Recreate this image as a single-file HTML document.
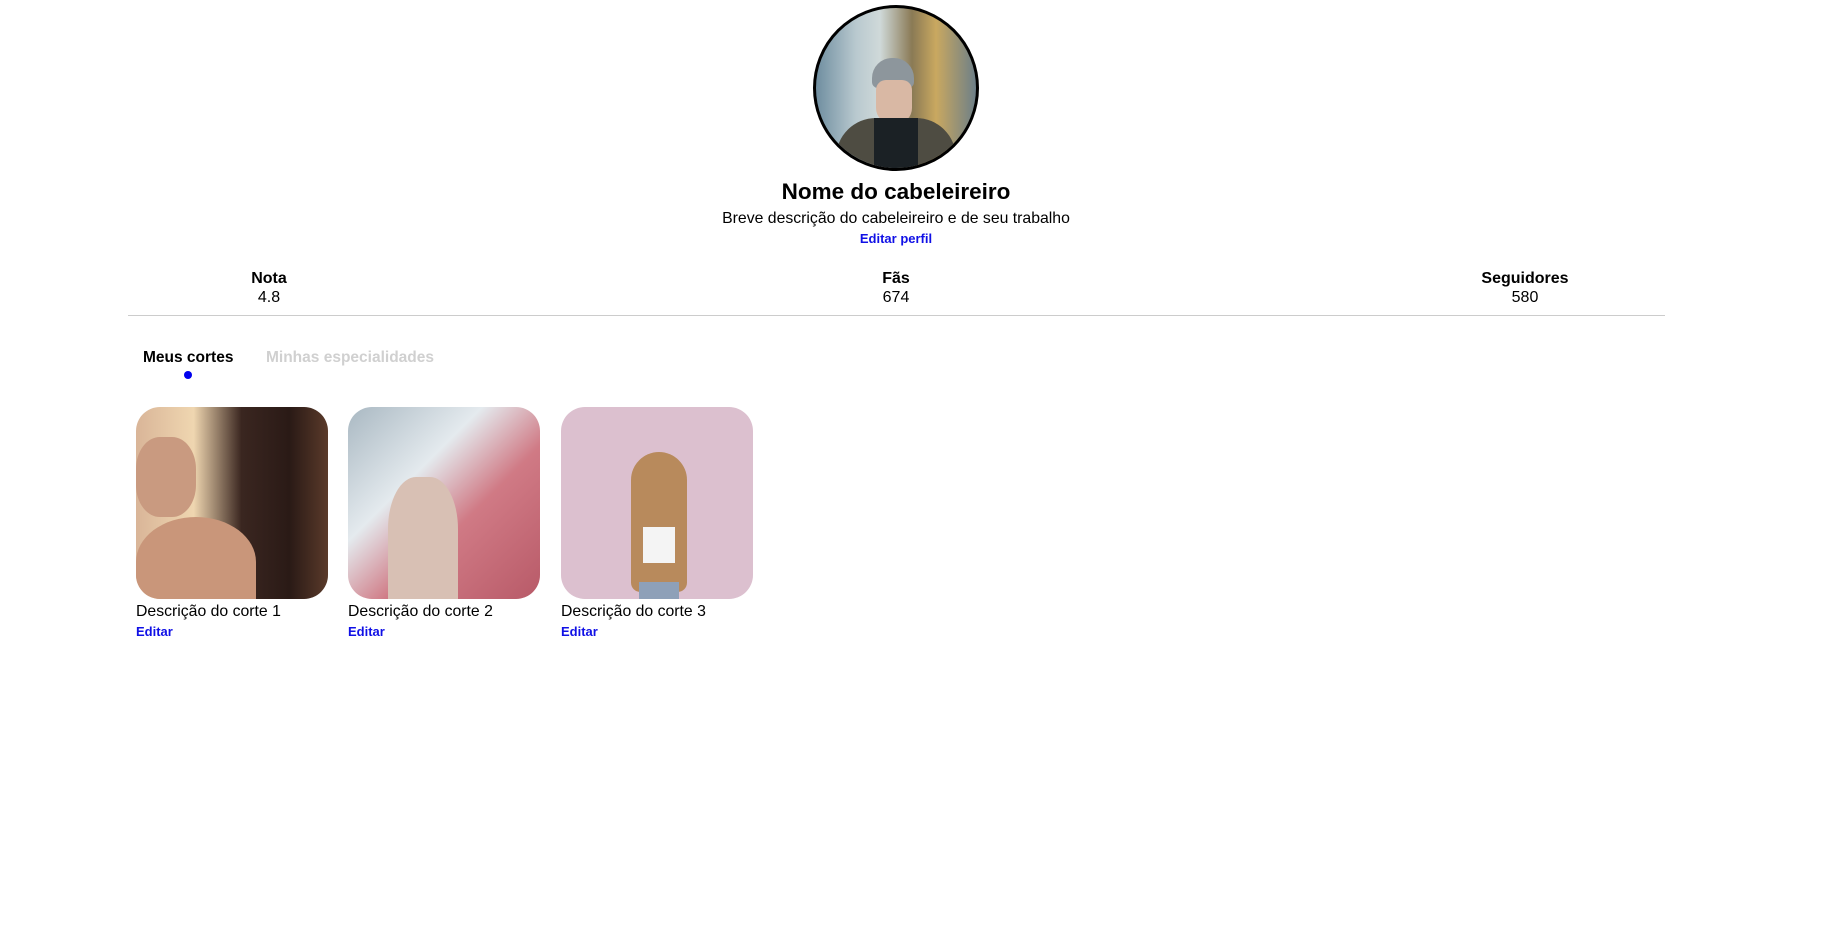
<!DOCTYPE html>
<html><head><meta charset="utf-8"><style>
*{margin:0;padding:0;box-sizing:border-box}
body{width:1842px;height:926px;background:#fff;font-family:"Liberation Sans",sans-serif;color:#000;position:relative;overflow:hidden}
.abs{position:absolute}
.c{transform:translateX(-50%);white-space:nowrap;text-align:center}
.avatar{left:813px;top:5px;width:166px;height:166px;border-radius:50%;border:3px solid #000;overflow:hidden;
background:linear-gradient(90deg,#6f8ea0 0%,#b9c9cf 25%,#cfd9d9 40%,#8a7a55 60%,#c9a860 75%,#6d7f88 100%)}
.blue{color:#1010e6;font-weight:bold;font-size:13px}
.card{top:407px;width:192px;height:192px;border-radius:24px;overflow:hidden}
</style></head><body>
<div class="abs avatar">
 <div class="abs" style="left:56px;top:50px;width:42px;height:30px;border-radius:20px 20px 6px 6px;background:#8d969c"></div>
 <div class="abs" style="left:60px;top:72px;width:36px;height:44px;border-radius:10px 10px 16px 16px;background:#d9b8a4"></div>
 <div class="abs" style="left:20px;top:110px;width:120px;height:70px;border-radius:40px 40px 0 0;background:#4e4c42"></div>
 <div class="abs" style="left:58px;top:110px;width:44px;height:60px;background:#1b2125"></div>
</div>
<div class="abs c" style="left:896px;top:179px;font-size:22.5px;font-weight:bold">Nome do cabeleireiro</div>
<div class="abs c" style="left:896px;top:210px;font-size:15.8px">Breve descrição do cabeleireiro e de seu trabalho</div>
<div class="abs c blue" style="left:896px;top:231px">Editar perfil</div>

<div class="abs c" style="left:269px;top:270px;font-size:16px;line-height:18.5px"><b>Nota</b><br>4.8</div>
<div class="abs c" style="left:896px;top:270px;font-size:16px;line-height:18.5px"><b>Fãs</b><br>674</div>
<div class="abs c" style="left:1525px;top:270px;font-size:16px;line-height:18.5px"><b>Seguidores</b><br>580</div>
<div class="abs" style="left:128px;top:315px;width:1537px;height:1px;background:#ccc"></div>

<div class="abs" style="left:143px;top:349px;font-size:15.5px;font-weight:bold">Meus cortes</div>
<div class="abs" style="left:266px;top:349px;font-size:15.5px;font-weight:bold;color:#d0d0d0">Minhas especialidades</div>
<div class="abs" style="left:184px;top:371px;width:8px;height:8px;border-radius:50%;background:#0000ee"></div>

<div class="abs card" style="left:136px;background:linear-gradient(90deg,#d9b598 0%,#efd6b0 30%,#3a2620 55%,#2a1a16 80%,#5a3a2a 100%)">
 <div class="abs" style="left:0;top:110px;width:120px;height:90px;border-radius:50% 50% 0 0;background:#c9967a"></div>
 <div class="abs" style="left:0;top:30px;width:60px;height:80px;border-radius:40%;background:#c99a80"></div>
</div>
<div class="abs card" style="left:348px;background:linear-gradient(135deg,#a9b8c2 0%,#e4eaee 35%,#d07a85 60%,#b85a68 100%)">
 <div class="abs" style="left:40px;top:70px;width:70px;height:130px;border-radius:40% 40% 0 0;background:#d8c0b4"></div>
</div>
<div class="abs card" style="left:561px;background:#dcc0cf">
 <div class="abs" style="left:70px;top:45px;width:56px;height:140px;border-radius:30px 30px 10px 10px;background:#b88a5c"></div>
 <div class="abs" style="left:82px;top:120px;width:32px;height:36px;background:#f4f4f4"></div>
 <div class="abs" style="left:78px;top:175px;width:40px;height:20px;background:#8ea0b8"></div>
</div>

<div class="abs" style="left:136px;top:603px;font-size:15.8px">Descrição do corte 1</div>
<div class="abs blue" style="left:136px;top:624px">Editar</div>
<div class="abs" style="left:348px;top:603px;font-size:15.8px">Descrição do corte 2</div>
<div class="abs blue" style="left:348px;top:624px">Editar</div>
<div class="abs" style="left:561px;top:603px;font-size:15.8px">Descrição do corte 3</div>
<div class="abs blue" style="left:561px;top:624px">Editar</div>
</body></html>
